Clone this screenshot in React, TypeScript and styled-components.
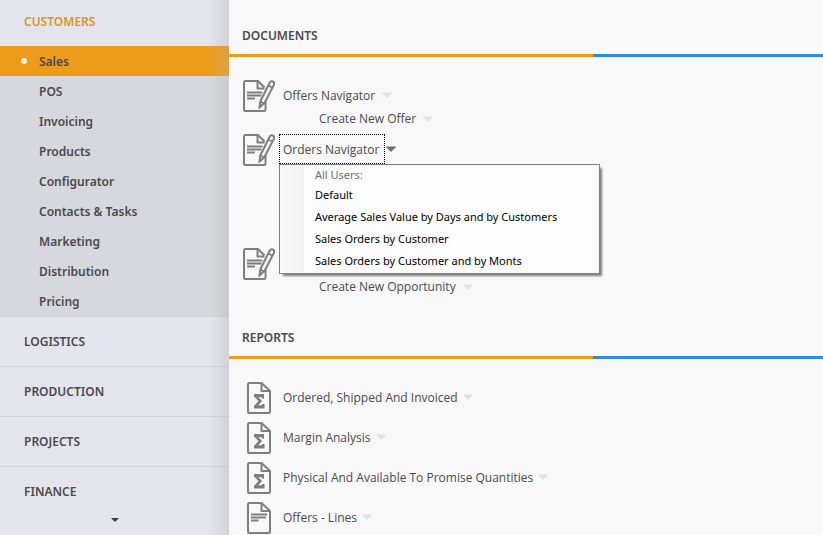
import React from "react";
import styled, { createGlobalStyle, css } from "styled-components";

const orange = "#ec9c1a";
const blue = "#2f8be0";
const ink = "#4a4a4e";
const iconGray = "#7e7e7e";

const GlobalStyle = createGlobalStyle`
  *, *::before, *::after { box-sizing: border-box; }
  html, body { margin: 0; background: #f8f8f8; }
  body { font-family: "Open Sans", "Noto Sans", sans-serif; font-size: 12px; color: ${ink}; }
  button { font: inherit; color: inherit; background: none; border: 0; padding: 0; cursor: pointer; }
  a { color: inherit; text-decoration: none; }
  ul { list-style: none; margin: 0; padding: 0; }
`;

const Page = styled.div`
  display: grid;
  grid-template-columns: 229px minmax(0, 1fr);
  height: 100vh;
  overflow: hidden;
`;

const Sidebar = styled.nav`
  position: relative;
  display: flex;
  flex-direction: column;
  background: #e4e5ec;
  font-family: "Noto Sans", "Open Sans", sans-serif;
  font-weight: 600;

  &::after {
    content: "";
    position: absolute;
    inset: 0 0 0 auto;
    width: 20px;
    background: linear-gradient(to right, rgba(174, 170, 176, 0), rgba(174, 170, 176, 0.35));
    pointer-events: none;
  }
`;

const Category = styled.button<{ $open?: boolean; $last?: boolean }>`
  flex: none;
  height: ${(p) => (p.$open ? 46 : 50)}px;
  padding: 0 24px ${(p) => (p.$open ? 4 : 0)}px;
  text-align: left;
  ${(p) =>
    p.$open
      ? css`color: #dc941f;`
      : css`border-bottom: 1px solid ${p.$last ? "transparent" : "#d3d3d7"};`}
`;

const SubMenu = styled.ul`
  flex: none;
  background: #d7d8dd;
  border-bottom: 1px solid #d3d3d7;
`;

const SubItem = styled.a<{ $active?: boolean }>`
  display: flex;
  align-items: center;
  height: 30px;
  padding-left: 21px;
  background: ${(p) => (p.$active ? orange : "transparent")};

  &::before {
    content: "";
    width: 6px;
    height: 6px;
    margin-right: 12px;
    border-radius: 50%;
    background: ${(p) => (p.$active ? "#fbf3e4" : "transparent")};
  }
`;

const MoreButton = styled.button`
  display: flex;
  justify-content: center;
  align-items: flex-start;
  height: 18px;
  padding-top: 1px;
`;

const Main = styled.main`
  padding-top: 14px;
`;

const Section = styled.section<{ $spaced?: boolean }>`
  margin-bottom: ${(p) => (p.$spaced ? 21 : 0)}px;
`;

const Heading = styled.h2`
  margin: 0;
  height: 40px;
  padding-left: 13px;
  font: 600 12px/44px "Noto Sans", "Open Sans", sans-serif;
`;

const Rule = styled.div`
  height: 3px;
  background: linear-gradient(to right, ${orange} 61.3%, ${blue} 61.3%);
`;

const Groups = styled.div`
  display: flex;
  flex-direction: column;
  gap: 7px;
  padding: 23px 0 0 14px;
`;

const Group = styled.div<{ $tall?: boolean }>`
  position: relative;
  display: grid;
  grid-template-columns: 32px 1fr;
  column-gap: 4px;
  align-items: start;
  min-height: ${(p) => (p.$tall ? 107 : 47)}px;
`;

const Row = styled.div`
  display: flex;
  align-items: center;
  height: 30px;
`;

const SubRow = styled.div`
  display: flex;
  align-items: center;
  height: 17px;
  padding-left: 36px;
`;

const Entry = styled.button<{ $focused?: boolean }>`
  height: 100%;
  padding: 0 5px 0 3px;
  border: 1px dotted ${(p) => (p.$focused ? "#000" : "transparent")};
  white-space: nowrap;
`;

const SubEntry = styled(Entry)`
  line-height: 15px;
`;

const DropButton = styled.button`
  display: flex;
  flex: none;
`;

const Reports = styled.ul`
  display: flex;
  flex-direction: column;
  gap: 8px;
  padding: 23px 0 0 14px;
`;

const Report = styled.li`
  display: grid;
  grid-template-columns: 32px 1fr;
  column-gap: 4px;
  align-items: start;

  ${Entry} { padding-right: 3px; }
`;

const Menu = styled.div`
  position: absolute;
  z-index: 2;
  top: 30px;
  left: 36px;
  display: flex;
  flex-direction: column;
  width: 321px;
  padding: 1px;
  border: 1px solid #808080;
  background: linear-gradient(to right, #fcfcfc, #f1f1f1 24px, #fdfdfd 24px);
  background-clip: content-box;
  background-color: #fdfdfd;
  box-shadow: 3px 3px 2px -1px rgba(0, 0, 0, 0.5);
  font: 11px/22px "Noto Sans", "Open Sans", sans-serif;
  color: #000;
`;

const MenuTitle = styled.div`
  height: 18px;
  padding-left: 34px;
  line-height: 18px;
  color: #6d6d6d;
`;

const MenuItem = styled.button`
  height: 22px;
  padding-left: 34px;
  text-align: left;
`;

const Caret = ({ color = "#e2e2e2" }: { color?: string }) => (
  <svg width="12" height="6" viewBox="0 0 12 6" aria-hidden="true">
    <path d="M0.5 0.5h11L6 6z" fill={color} />
  </svg>
);

const EditIcon = () => (
  <svg width="32" height="32" viewBox="0 0 32 32" fill="none" stroke={iconGray} strokeWidth="2" strokeLinejoin="round" aria-hidden="true">
    <path d="M22.500 20v9.500q0 1.500-1.500 1.500H2.500Q1 31 1 29.500v-27Q1 1 2.500 1H15l6.500 6.500" />
    <path d="M14.500 1v7.500h7" />
    <path d="M4 12.500h15.500M4 15.500h14.500M4 18.500h8" strokeWidth="1.800" />
    <path d="M26.500 3q1.200-2.400 3.200-1.500t1.300 3.100L21.500 23l-5 4.500.8-6z" fill="#f8f8f8" />
    <path d="M25 5.500l4.500 2M17.500 21.500l3.500 2" strokeWidth="1.800" />
    <path d="M16.500 24l-1.200 5.500 4.500-4z" fill={iconGray} stroke="none" />
  </svg>
);

const ReportIcon = ({ kind }: { kind: "sum" | "lines" }) => (
  <svg width="32" height="32" viewBox="0 0 32 32" fill="none" stroke={iconGray} strokeWidth="2" strokeLinejoin="round" aria-hidden="true">
    <path d="M18.500 1h-12Q5 1 5 2.500v27Q5 31 6.500 31h19q1.500 0 1.500-1.500V9z" />
    <path d="M18.500 1.500v7.500H26" />
    {kind === "sum" ? (
      <path d="M11 12h10v4.500h-2.500V15H15.500l3.500 4-3.500 4.300h3.500V22h2.500v4.500H11V24l4.500-5-4.500-4.500z" fill={iconGray} stroke="none" />
    ) : (
      <path d="M8 12.500h16M8 15.500h15M8 18.500h7.500" strokeWidth="1.800" />
    )}
  </svg>
);

const areas = ["Sales", "POS", "Invoicing", "Products", "Configurator", "Contacts & Tasks", "Marketing", "Distribution", "Pricing"];
const categories = ["LOGISTICS", "PRODUCTION", "PROJECTS", "FINANCE"];
const views = ["Default", "Average Sales Value by Days and by Customers", "Sales Orders by Customer", "Sales Orders by Customer and by Monts"];
const reports: { title: string; kind: "sum" | "lines" }[] = [
  { title: "Ordered, Shipped And Invoiced", kind: "sum" },
  { title: "Margin Analysis", kind: "sum" },
  { title: "Physical And Available To Promise Quantities", kind: "sum" },
  { title: "Offers - Lines", kind: "lines" },
];

export default function App() {
  return (
    <>
      <GlobalStyle />
      <Page>
        <Sidebar>
          <Category $open aria-expanded="true">CUSTOMERS</Category>
          <SubMenu>
            {areas.map((name, i) => (
              <li key={name}>
                <SubItem href="#" $active={i === 0}>{name}</SubItem>
              </li>
            ))}
          </SubMenu>
          {categories.map((name, i) => (
            <Category key={name} $last={i === categories.length - 1}>{name}</Category>
          ))}
          <MoreButton aria-label="More categories">
            <svg width="8" height="4" viewBox="0 0 8 4" aria-hidden="true">
              <path d="M0 0h8L4 4z" fill="#3f3f42" />
            </svg>
          </MoreButton>
        </Sidebar>

        <Main>
          <Section $spaced>
            <Heading>DOCUMENTS</Heading>
            <Rule />
            <Groups>
              <Group>
                <EditIcon />
                <div>
                  <Row>
                    <Entry>Offers Navigator</Entry>
                    <DropButton aria-label="Offers Navigator views"><Caret /></DropButton>
                  </Row>
                  <SubRow>
                    <SubEntry>Create New Offer</SubEntry>
                    <DropButton aria-label="Create New Offer options"><Caret /></DropButton>
                  </SubRow>
                </div>
              </Group>
              <Group $tall>
                <EditIcon />
                <Row>
                  <Entry $focused>Orders Navigator</Entry>
                  <DropButton aria-label="Orders Navigator views" aria-expanded="true">
                    <Caret color="#6e6e6e" />
                  </DropButton>
                </Row>
                <Menu role="menu">
                  <MenuTitle>All Users:</MenuTitle>
                  {views.map((view) => (
                    <MenuItem key={view} role="menuitem">{view}</MenuItem>
                  ))}
                </Menu>
              </Group>
              <Group>
                <EditIcon />
                <div>
                  <Row />
                  <SubRow>
                    <SubEntry>Create New Opportunity</SubEntry>
                    <DropButton aria-label="Create New Opportunity options"><Caret /></DropButton>
                  </SubRow>
                </div>
              </Group>
            </Groups>
          </Section>

          <Section>
            <Heading>REPORTS</Heading>
            <Rule />
            <Reports>
              {reports.map(({ title, kind }) => (
                <Report key={title}>
                  <ReportIcon kind={kind} />
                  <Row>
                    <Entry>{title}</Entry>
                    <DropButton aria-label={title + " views"}><Caret /></DropButton>
                  </Row>
                </Report>
              ))}
            </Reports>
          </Section>
        </Main>
      </Page>
    </>
  );
}
